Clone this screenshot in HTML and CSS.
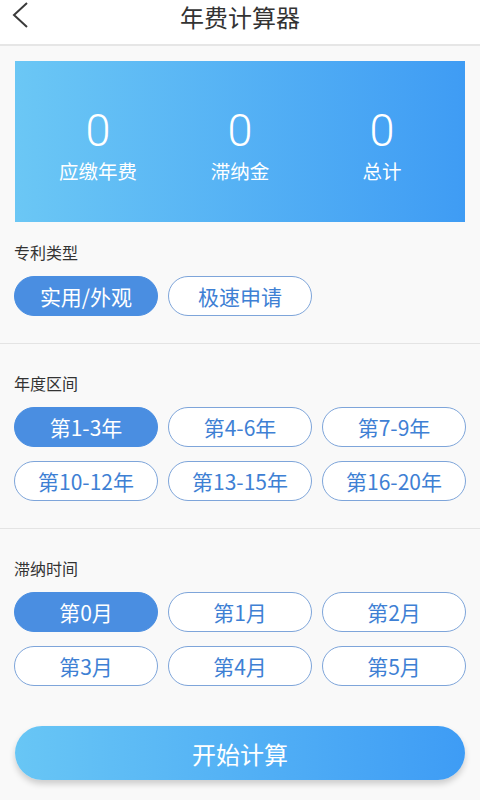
FILE: index.html
```html
<!DOCTYPE html>
<html lang="zh">
<head>
<meta charset="utf-8">
<title>年费计算器</title>
<link rel="stylesheet" href="styles.css">
</head>
<body>
<header class="topbar">
  <svg class="back" width="20" height="30" viewBox="0 0 20 30"><polyline points="15,3 2,15 15,27" fill="none" stroke="#3a3a3a" stroke-width="2"/></svg>
  <h1 class="title">年费计算器</h1>
</header>
<main>
  <div class="card-wrap">
    <div class="card">
      <div class="stat"><div class="num">0</div><div class="lbl">应缴年费</div></div>
      <div class="stat"><div class="num">0</div><div class="lbl">滞纳金</div></div>
      <div class="stat"><div class="num">0</div><div class="lbl">总计</div></div>
    </div>
  </div>
  <section class="sec sec-first">
    <div class="sec-label">专利类型</div>
    <div class="grid">
      <button class="opt on">实用/外观</button>
      <button class="opt">极速申请</button>
    </div>
  </section>
  <section class="sec">
    <div class="sec-label">年度区间</div>
    <div class="grid">
      <button class="opt on">第1-3年</button>
      <button class="opt">第4-6年</button>
      <button class="opt">第7-9年</button>
      <button class="opt">第10-12年</button>
      <button class="opt">第13-15年</button>
      <button class="opt">第16-20年</button>
    </div>
  </section>
  <section class="sec sec-last">
    <div class="sec-label">滞纳时间</div>
    <div class="grid">
      <button class="opt on">第0月</button>
      <button class="opt">第1月</button>
      <button class="opt">第2月</button>
      <button class="opt">第3月</button>
      <button class="opt">第4月</button>
      <button class="opt">第5月</button>
    </div>
  </section>
  <div class="go-wrap"><button class="go">开始计算</button></div>
</main>
</body>
</html>
```
FILE: styles.css
```css
* { box-sizing: border-box; }
html, body { margin: 0; padding: 0; }
body {
  width: 480px;
  height: 800px;
  overflow: hidden;
  background: #f9f9f9;
  font-family: "Noto Sans CJK SC", "Noto Sans", sans-serif;
  color: #333;
}
.topbar {
  position: relative;
  height: 46px;
  background: #fff;
  border-bottom: 2px solid #e6e6e6;
  display: flex;
  align-items: flex-start;
  justify-content: center;
}
.back {
  position: absolute;
  left: 12px;
  top: 0;
}
.title {
  margin: 2px 0 0;
  font-size: 24px;
  font-weight: 400;
  line-height: 30px;
  color: #333;
}
.card-wrap { padding: 15px 15px 0; }
.card {
  height: 161px;
  background: linear-gradient(90deg, #6bc7f5 0%, #3f9cf4 100%);
  display: flex;
  padding: 45px 12px 0;
}
.stat {
  flex: 1;
  display: flex;
  flex-direction: column;
  align-items: center;
  color: #fff;
}
.num {
  font-size: 45px;
  line-height: 50px;
  font-family: Roboto, "Noto Sans", sans-serif;
  font-weight: 300;
}
.lbl {
  margin-top: 2px;
  font-size: 19.5px;
  line-height: 26px;
}
.sec {
  padding: 29px 14px 27px;
  border-bottom: 1px solid #e4e4e4;
}
.sec-first { padding-top: 20px; }
.sec-last { border-bottom: none; padding-bottom: 0; }
.sec-label {
  font-size: 16px;
  line-height: 20px;
  color: #333;
  margin-bottom: 14px;
}
.grid {
  display: grid;
  grid-template-columns: repeat(3, 1fr);
  column-gap: 10px;
  row-gap: 14px;
}
.opt {
  height: 40px;
  border-radius: 20px;
  border: 1.5px solid #7ea5da;
  background: #fff;
  color: #3e80d4;
  font-family: "Noto Sans CJK SC", "Noto Sans", sans-serif;
  font-size: 21px;
  padding: 0;
  line-height: 1;
}
.opt.on {
  background: #4a8ee1;
  border-color: #4a8ee1;
  color: #fff;
}
.go-wrap { padding: 40px 15px 0; }
.go {
  width: 100%;
  height: 54px;
  border: none;
  border-radius: 27px;
  background: linear-gradient(90deg, #68c6f5 0%, #3e9cf5 100%);
  box-shadow: 0 4px 6px rgba(0, 0, 0, 0.18);
  color: #fff;
  font-family: "Noto Sans CJK SC", "Noto Sans", sans-serif;
  font-size: 24px;
  padding: 0;
}
```
